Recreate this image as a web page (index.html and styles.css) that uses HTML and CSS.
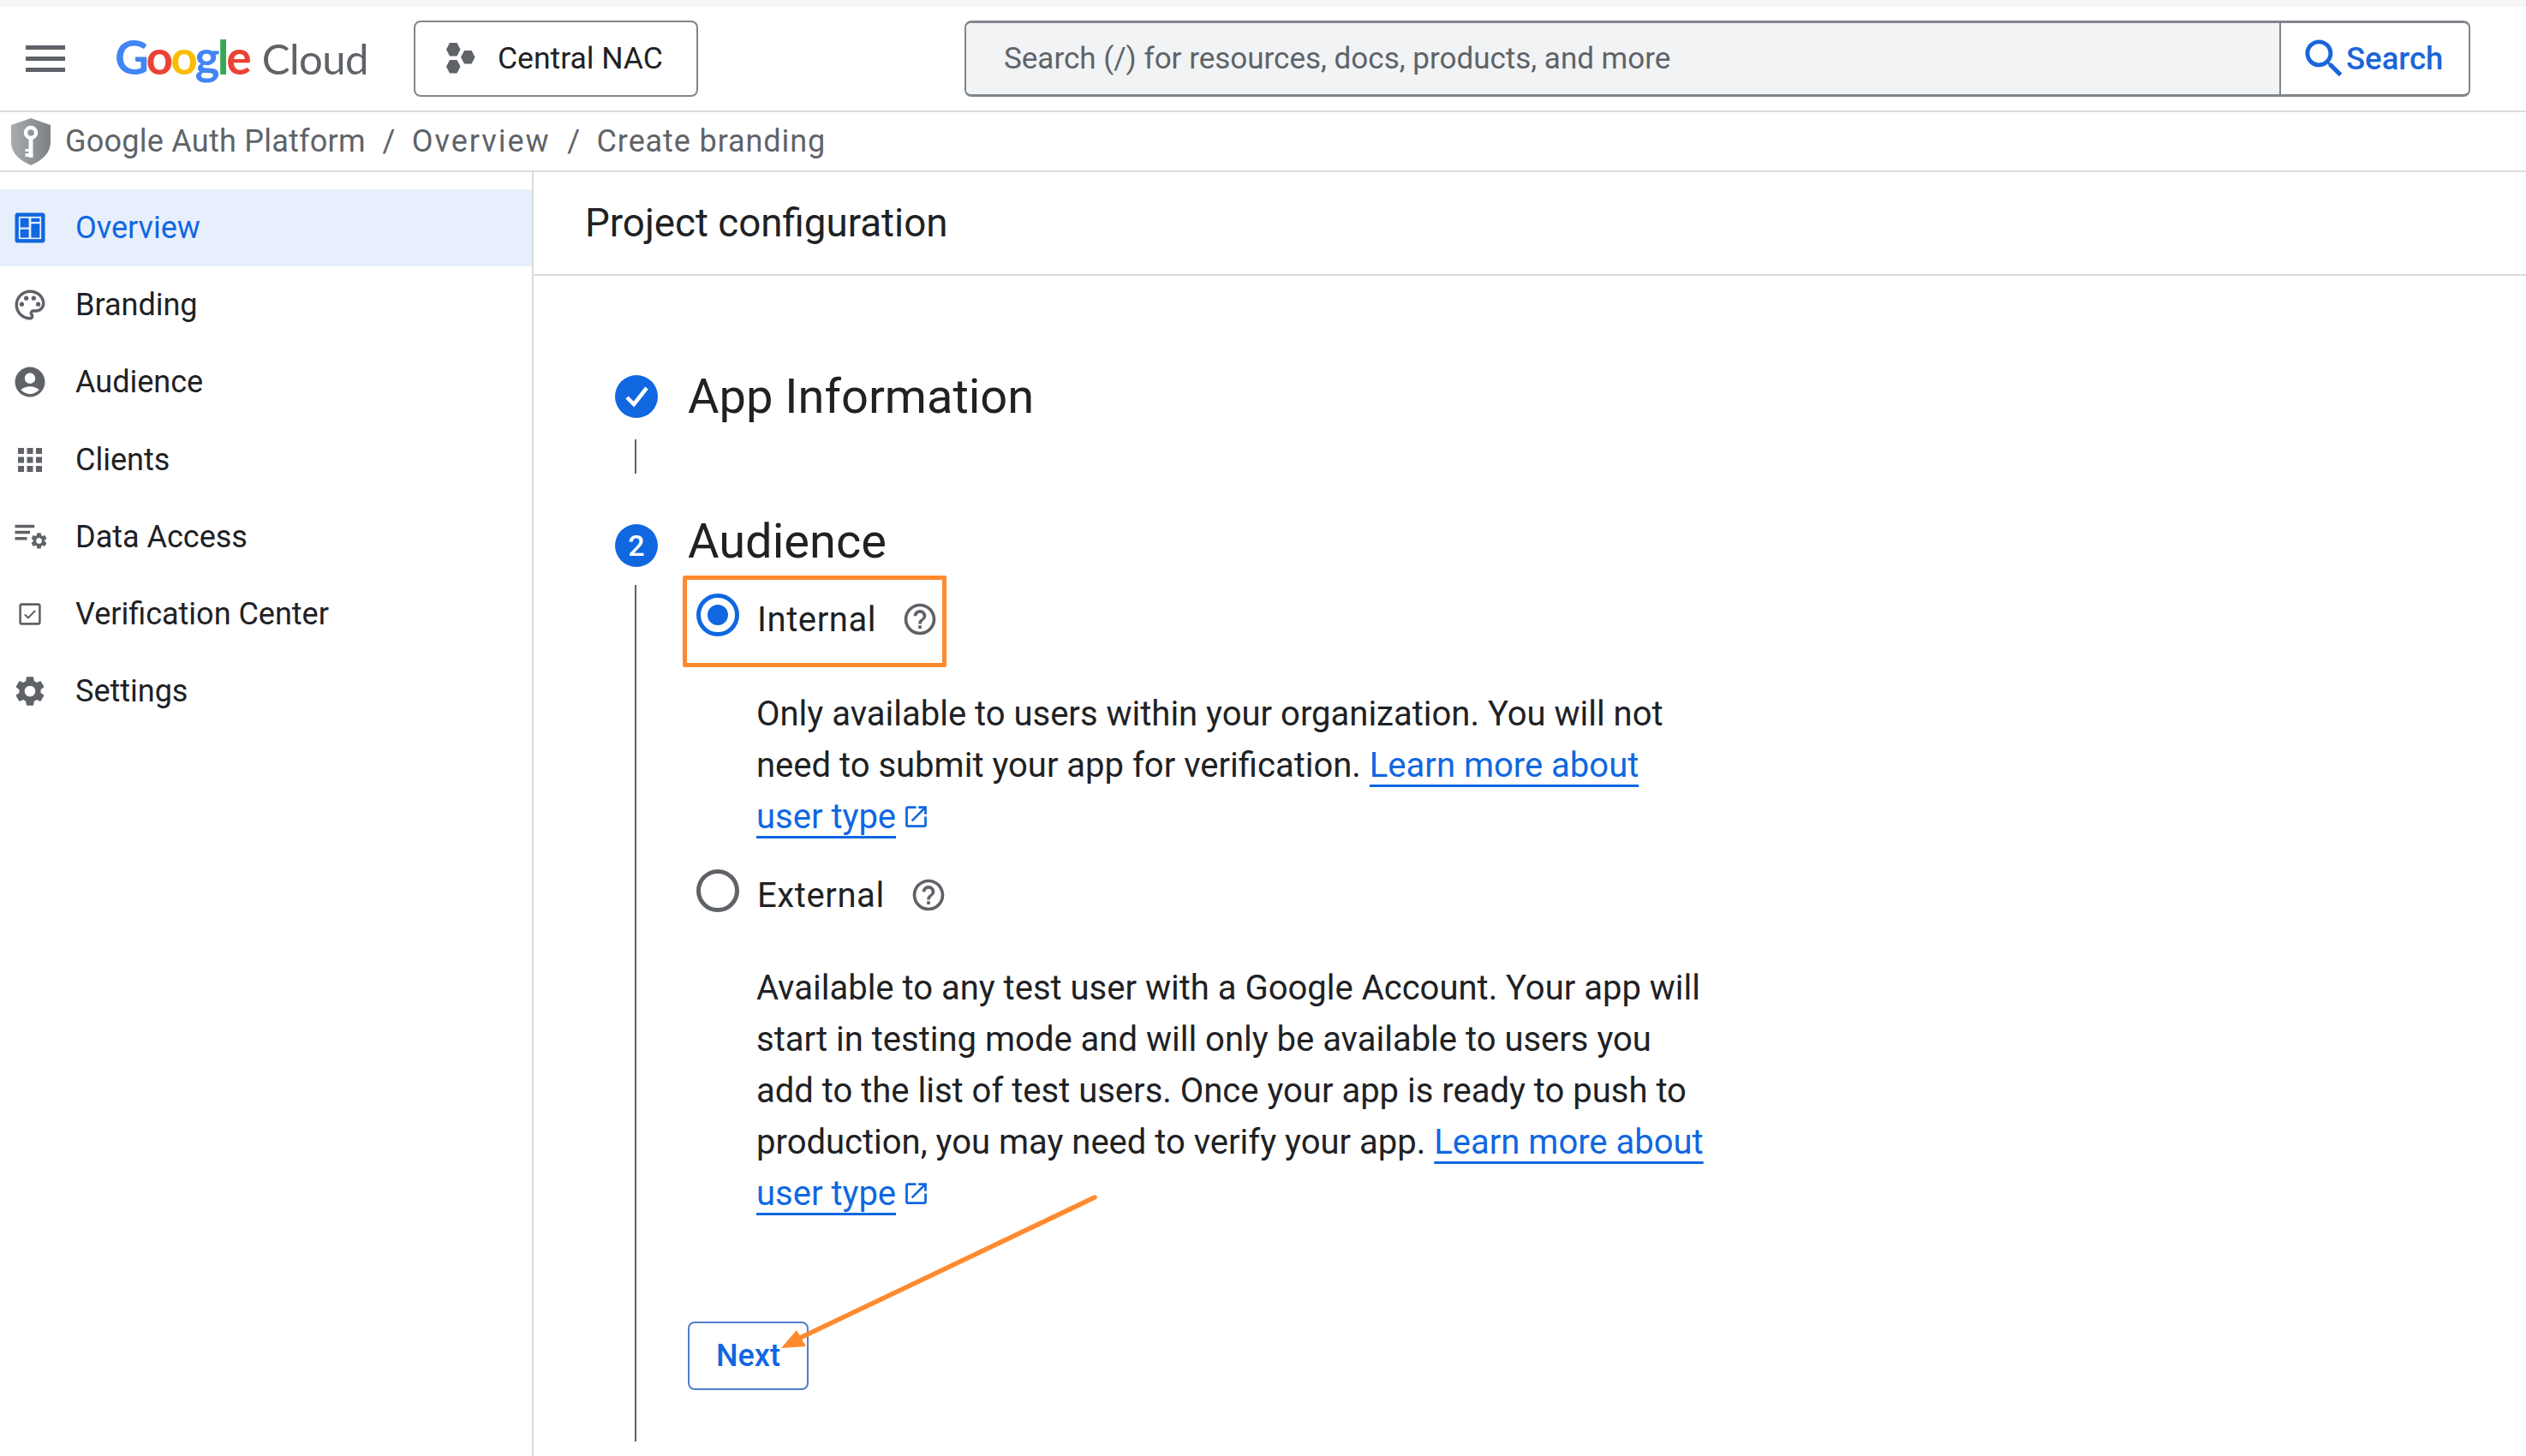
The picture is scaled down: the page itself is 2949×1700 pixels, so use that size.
FILE: index.html
```html
<!DOCTYPE html>
<html lang="en">
<head>
  <meta charset="UTF-8" />
  <title>Google Auth Platform - Create branding</title>
  <link rel="stylesheet" href="styles.css">
</head>
<body>
  <svg class="defs" width="0" height="0">
    <symbol id="gear" viewBox="0 0 24 24"><path d="M19.14 12.94c.04-.3.06-.61.06-.94 0-.32-.02-.64-.07-.94l2.03-1.58a.49.49 0 0 0 .12-.61l-1.92-3.32a.488.488 0 0 0-.59-.22l-2.39.96c-.5-.38-1.03-.7-1.62-.94l-.36-2.54a.484.484 0 0 0-.48-.41h-3.84c-.24 0-.43.17-.47.41l-.36 2.54c-.59.24-1.13.57-1.62.94l-2.39-.96c-.22-.08-.47 0-.59.22L2.74 8.87c-.12.21-.08.47.12.61l2.03 1.58c-.05.3-.09.63-.09.94s.02.64.07.94l-2.03 1.58a.49.49 0 0 0-.12.61l1.92 3.32c.12.22.37.29.59.22l2.39-.96c.5.38 1.03.7 1.62.94l.36 2.54c.05.24.24.41.48.41h3.84c.24 0 .44-.17.47-.41l.36-2.54c.59-.24 1.13-.56 1.62-.94l2.39.96c.22.08.47 0 .59-.22l1.92-3.32c.12-.22.07-.47-.12-.61l-2.01-1.58zM12 15.6c-1.98 0-3.6-1.62-3.6-3.6s1.62-3.6 3.6-3.6 3.6 1.62 3.6 3.6-1.62 3.6-3.6 3.6z"/></symbol>
    <symbol id="help" viewBox="0 0 24 24"><path d="M11 18h2v-2h-2v2zm1-16C6.48 2 2 6.48 2 12s4.48 10 10 10 10-4.48 10-10S17.52 2 12 2zm0 18c-4.41 0-8-3.59-8-8s3.59-8 8-8 8 3.59 8 8-3.59 8-8 8zm0-14c-2.21 0-4 1.79-4 4h2c0-1.1.9-2 2-2s2 .9 2 2c0 2-3 1.75-3 5h2c0-2.25 3-2.5 3-5 0-2.21-1.79-4-4-4z"/></symbol>
    <symbol id="open" viewBox="0 0 24 24"><path d="M19 19H5V5h7V3H5a2 2 0 0 0-2 2v14a2 2 0 0 0 2 2h14c1.1 0 2-.9 2-2v-7h-2v7zM14 3v2h3.59l-9.83 9.83 1.41 1.41L19 6.41V10h2V3h-7z"/></symbol>
  </svg>

  <header class="topbar">
    <div class="menu-btn"><span></span><span></span><span></span></div>
    <div class="logo">
      <span class="logo-google"><span class="g-blue">G</span><span class="g-red">o</span><span class="g-yellow">o</span><span class="g-blue">g</span><span class="g-green">l</span><span class="g-red">e</span></span>
      <span class="logo-cloud">Cloud</span>
    </div>
    <div class="project-btn">
      <svg class="hex-icon" viewBox="0 0 36 36">
        <polygon points="1,7.750 5,0 13.500,0 17.500,7.750 13.500,15.500 5,15.500"/>
        <polygon points="18,16.750 22,9 30.500,9 34.500,16.750 30.500,24.500 22,24.500"/>
        <polygon points="1,27.750 5,20 13.500,20 17.500,27.750 13.500,35.500 5,35.500"/>
      </svg>
      <span>Central NAC</span>
    </div>
    <div class="search">
      <div class="search-input">Search (/) for resources, docs, products, and more</div>
      <div class="search-btn">
        <svg class="search-icon" viewBox="0 0 24 24"><path d="M15.5 14h-.79l-.28-.27A6.471 6.471 0 0 0 16 9.5 6.5 6.5 0 1 0 9.5 16c1.61 0 3.09-.59 4.23-1.57l.27.28v.79l5 4.99L20.49 19l-4.99-5zm-6 0C7.01 14 5 11.99 5 9.5S7.01 5 9.5 5 14 7.01 14 9.5 11.99 14 9.5 14z"/></svg>
        <span>Search</span>
      </div>
    </div>
  </header>

  <div class="breadcrumb">
    <svg class="shield" viewBox="0 0 46 55">
      <defs>
        <linearGradient id="shield-fill" x1="0" x2="1" y1="0" y2="0">
          <stop offset="0" stop-color="#a8acb0"/>
          <stop offset="1" stop-color="#7d8186"/>
        </linearGradient>
      </defs>
      <path d="M23 0 46 8v20c0 12-9 21-23 27C9 49 0 40 0 28V8z" fill="url(#shield-fill)"/>
      <circle cx="23" cy="17" r="6" fill="none" stroke="#fff" stroke-width="4.500"/>
      <path d="M20.500 23h5v23h-5zM16.500 36h4v3h-4zM16.500 41h4v4h-4z" fill="#fff"/>
    </svg>
    <span class="crumb-root">Google Auth Platform</span>
    <span class="crumb-sep">/</span>
    <span class="crumb-mid">Overview</span>
    <span class="crumb-sep">/</span>
    <span class="crumb-last">Create branding</span>
  </div>

  <div class="layout">
    <nav class="sidebar">
      <a class="nav-item active">
        <svg class="nav-icon" viewBox="0 0 24 24">
          <rect x="0" y="0" width="24" height="24" rx="2" transform="translate(2 2) scale(.834)"/>
          <rect x="4.500" y="4.500" width="15" height="15" fill="#e8effc"/>
          <path d="M5.500 5.500h5.700v6.200H5.500zM5.500 13h5.700v5.500H5.500zM12.800 5.500h5.700v2.500h-5.700zM12.800 9.300h5.700v9.200h-5.700z"/>
        </svg>
        <span>Overview</span>
      </a>
      <a class="nav-item">
        <svg class="nav-icon" viewBox="0 0 24 24">
          <path d="M12 22C6.490 22 2 17.510 2 12S6.490 2 12 2s10 4.040 10 9c0 3.310-2.690 6-6 6h-1.770c-.28 0-.5.22-.5.5 0 .12.05.23.13.33.41.47.64 1.060.64 1.670A2.500 2.500 0 0 1 12 22zm0-18c-4.410 0-8 3.590-8 8s3.590 8 8 8c.28 0 .5-.22.5-.5a.54.54 0 0 0-.14-.35c-.41-.46-.63-1.050-.63-1.650a2.500 2.500 0 0 1 2.500-2.500H16c2.210 0 4-1.790 4-4 0-3.860-3.590-7-8-7z"/>
          <circle cx="6.500" cy="11.500" r="1.500"/><circle cx="9.500" cy="7.500" r="1.500"/><circle cx="14.500" cy="7.500" r="1.500"/><circle cx="17.500" cy="11.500" r="1.500"/>
        </svg>
        <span>Branding</span>
      </a>
      <a class="nav-item">
        <svg class="nav-icon" viewBox="0 0 24 24"><path d="M12 2C6.480 2 2 6.480 2 12s4.480 10 10 10 10-4.480 10-10S17.520 2 12 2zm0 4c1.930 0 3.500 1.570 3.500 3.500S13.930 13 12 13s-3.500-1.570-3.500-3.500S10.070 6 12 6zm0 14c-2.030 0-4.430-.82-6.140-2.880C7.550 15.800 9.680 15 12 15s4.450.8 6.140 2.120C16.430 19.180 14.030 20 12 20z"/></svg>
        <span>Audience</span>
      </a>
      <a class="nav-item">
        <svg class="nav-icon" viewBox="0 0 24 24"><path d="M4 8h4V4H4v4zm6 12h4v-4h-4v4zm-6 0h4v-4H4v4zm0-6h4v-4H4v4zm6 0h4v-4h-4v4zm6-10v4h4V4h-4zm-6 4h4V4h-4v4zm6 6h4v-4h-4v4zm0 6h4v-4h-4v4z"/></svg>
        <span>Clients</span>
      </a>
      <a class="nav-item">
        <svg class="nav-icon" viewBox="0 0 24 24">
          <path d="M2 3.800h13v2H2zM2 7.900h10v2H2zM2 12h8v2H2z"/>
          <use href="#gear" x="11.500" y="8" width="13" height="13"/>
        </svg>
        <span>Data Access</span>
      </a>
      <a class="nav-item">
        <svg class="nav-icon" viewBox="0 0 24 24">
          <rect x="5.500" y="5.500" width="13" height="13" rx="1" fill="none" stroke="#5f6368" stroke-width="1.500"/>
          <path d="m8.500 12.300 2.300 2.200 4.700-4.800" fill="none" stroke="#5f6368" stroke-width="1.200"/>
        </svg>
        <span>Verification Center</span>
      </a>
      <a class="nav-item">
        <svg class="nav-icon"><use href="#gear"/></svg>
        <span>Settings</span>
      </a>
    </nav>

    <main class="content">
      <div class="page-title">Project configuration</div>

      <div class="stepper">
        <section class="step step-done">
          <div class="step-rail">
            <div class="step-badge">
              <svg class="check" viewBox="0 0 50 50"><path d="m14 26 8 8 15-19" fill="none" stroke="#fff" stroke-width="4.500"/></svg>
            </div>
            <div class="step-line short"></div>
          </div>
          <h2 class="step-title">App Information</h2>
        </section>

        <section class="step">
          <div class="step-rail">
            <div class="step-badge">2</div>
            <div class="step-line long"></div>
          </div>
          <div class="step-body">
            <h2 class="step-title raised">Audience</h2>

            <div class="option highlighted">
              <span class="radio checked"></span>
              <span class="option-label">Internal</span>
              <svg class="help-icon"><use href="#help"/></svg>
            </div>
            <p class="option-desc">Only available to users within your organization. You will not need to submit your app for verification. <a class="ext-link">Learn more about user type</a><svg class="open-icon"><use href="#open"/></svg></p>

            <div class="option external">
              <span class="radio"></span>
              <span class="option-label">External</span>
              <svg class="help-icon"><use href="#help"/></svg>
            </div>
            <p class="option-desc">Available to any test user with a Google Account. Your app will start in testing mode and will only be available to users you add to the list of test users. Once your app is ready to push to production, you may need to verify your app. <a class="ext-link">Learn more about user type</a><svg class="open-icon"><use href="#open"/></svg></p>

            <button class="next-btn">Next</button>
          </div>
        </section>
      </div>
    </main>
  </div>

  <!-- annotation drawn on top of the screenshot -->
  <svg class="annotation" width="2949" height="1700">
    <line x1="1278" y1="1398" x2="930" y2="1564" stroke="#ff8a2e" stroke-width="5.500" stroke-linecap="round"/>
    <polygon points="912,1574 930,1553 941,1572" fill="#ff8a2e"/>
  </svg>
</body>
</html>
```

FILE: styles.css
```css
* {
  box-sizing: border-box;
}

html,
body {
  margin: 0;
  height: 1700px;
  overflow: hidden;
}

body {
  position: relative;
  font-family: Roboto, "Liberation Sans", sans-serif;
  background: #fff;
  color: #202124;
  border-top: 8px solid #f6f6f6;
}

.defs {
  position: absolute;
}

/* top bar */
.topbar {
  display: flex;
  align-items: center;
  height: 123px;
  border-bottom: 2px solid #dadce0;
  padding-bottom: 1px;
}

.menu-btn {
  display: flex;
  flex-direction: column;
  gap: 8px;
  width: 46px;
  margin-left: 30px;
}

.menu-btn span {
  height: 5px;
  background: #5f6368;
}

.logo {
  display: flex;
  align-items: baseline;
  width: 349px;
  margin: 0 0 5px 58px;
  gap: 15px;
}

.logo-google {
  font-family: Lato, sans-serif;
  font-size: 55px;
  font-weight: 700;
  letter-spacing: -3px;
}

.logo-cloud {
  font-family: Lato, sans-serif;
  font-size: 49px;
  letter-spacing: -.5px;
  color: #5f6368;
}

.g-blue { color: #4285f4; }
.g-red { color: #ea4335; }
.g-yellow { color: #fbbc05; }
.g-green { color: #34a853; }

.project-btn {
  display: flex;
  align-items: center;
  width: 332px;
  height: 89px;
  padding-left: 35px;
  gap: 25px;
  border: 2px solid #80868b;
  border-radius: 8px;
  font-size: 35.5px;
}

.hex-icon {
  width: 36px;
  height: 36px;
  fill: #5f6368;
}

.search {
  display: flex;
  width: 1758px;
  height: 89px;
  margin-left: 311px;
  border: 2px solid #80868b;
  border-top-width: 3px;
  border-bottom-width: 3px;
  border-radius: 8px;
  overflow: hidden;
}

.search-input {
  flex: 1;
  display: flex;
  align-items: center;
  padding-left: 44px;
  background: #f1f3f4;
  border-right: 2px solid #80868b;
  color: #5f6368;
  font-size: 35px;
}

.search-btn {
  display: flex;
  align-items: center;
  width: 219px;
  padding-left: 21px;
  color: #1a66d9;
  font-size: 36.5px;
  font-weight: 500;
}

.search-icon {
  width: 59px;
  height: 59px;
  margin-right: -4px;
  fill: #1a66d9;
}

/* breadcrumb */
.breadcrumb {
  display: flex;
  align-items: center;
  height: 70px;
  padding-left: 13px;
  border-bottom: 2px solid #dadce0;
  color: #5f6368;
  font-size: 36px;
}

.shield {
  width: 46px;
  height: 55px;
  margin-right: 17px;
}

.crumb-root {
  letter-spacing: .25px;
}

.crumb-mid {
  letter-spacing: 2px;
}

.crumb-last {
  letter-spacing: .9px;
}

.crumb-sep {
  margin: 0 19.5px;
}

/* sidebar */
.layout {
  display: flex;
  height: 1500px;
}

.sidebar {
  width: 623px;
  padding-top: 20px;
  border-right: 2px solid #dadce0;
}

.nav-item {
  display: flex;
  align-items: center;
  height: 90.2px;
  padding-left: 14px;
  gap: 32px;
  font-size: 36px;
}

.nav-item.active {
  background: #e8effc;
  color: #1067e0;
}

.nav-icon {
  width: 42px;
  height: 42px;
  fill: #5f6368;
}

.nav-item.active .nav-icon {
  fill: #1067e0;
}

/* main area */
.content {
  flex: 1;
}

.page-title {
  display: flex;
  align-items: center;
  height: 121px;
  padding-left: 60px;
  border-bottom: 2px solid #dadce0;
  padding-bottom: 1px;
  font-size: 45.7px;
}

.stepper {
  padding: 116px 0 0 95px;
}

.step {
  display: flex;
  gap: 35px;
}

.step-done {
  margin-bottom: 59px;
}

.step-rail {
  display: flex;
  flex-direction: column;
  align-items: center;
  width: 50px;
}

.step-badge {
  display: flex;
  align-items: center;
  justify-content: center;
  width: 50px;
  height: 50px;
  border-radius: 50%;
  background: #1067e0;
  color: #fff;
  font-size: 34px;
  font-weight: 500;
}

.check {
  width: 50px;
  height: 50px;
}

.step-line {
  width: 2px;
  margin-right: 2px;
  background: #5f6368;
}

.step-line.short {
  height: 40px;
  margin-top: 25px;
}

.step-line.long {
  height: 1000px;
  margin-top: 21px;
}

.step-title {
  margin: 0;
  font-size: 56px;
  font-weight: 400;
  line-height: 50px;
}

.step-title.raised {
  margin-top: -5px;
}

.option {
  display: flex;
  align-items: flex-start;
  width: 308px;
  height: 107px;
  margin: 15px 0 0 -6px;
  padding: 16px 0 0 11px;
  border: 5px solid transparent;
}

.option.highlighted {
  border-color: #ff8a2e;
  border-radius: 2px;
}

.option.external {
  height: 105px;
  margin-top: 10px;
}

.radio {
  flex: none;
  position: relative;
  width: 50px;
  height: 50px;
  border: 5px solid #5f6368;
  border-radius: 50%;
}

.radio.checked {
  border-color: #1067e0;
}

.radio.checked::after {
  content: "";
  position: absolute;
  inset: 8px;
  border-radius: 50%;
  background: #1067e0;
}

.option-label {
  margin-left: 21px;
  font-size: 40px;
  letter-spacing: .6px;
  line-height: 61px;
}

.help-icon {
  flex: none;
  width: 44px;
  height: 44px;
  margin: 8px 0 0 29px;
  fill: #5f6368;
}

.option-desc {
  width: 1110px;
  margin: 25px 0 0 80px;
  font-size: 40px;
  line-height: 60px;
}

.ext-link {
  color: #1067e0;
  text-decoration: underline;
  text-decoration-thickness: 3px;
  text-underline-offset: 9px;
}

.open-icon {
  width: 33px;
  height: 33px;
  margin-left: 7px;
  vertical-align: -3px;
  fill: #1067e0;
}

.next-btn {
  display: block;
  width: 141px;
  height: 80px;
  margin: 119px 0 0 0;
  background: #fff;
  border: 2px solid #4f7fcb;
  border-radius: 8px;
  color: #1067e0;
  font-family: inherit;
  font-size: 36px;
  font-weight: 500;
}

/* orange arrow over the page */
.annotation {
  position: absolute;
  top: -8px;
  left: 0;
  pointer-events: none;
}
```
